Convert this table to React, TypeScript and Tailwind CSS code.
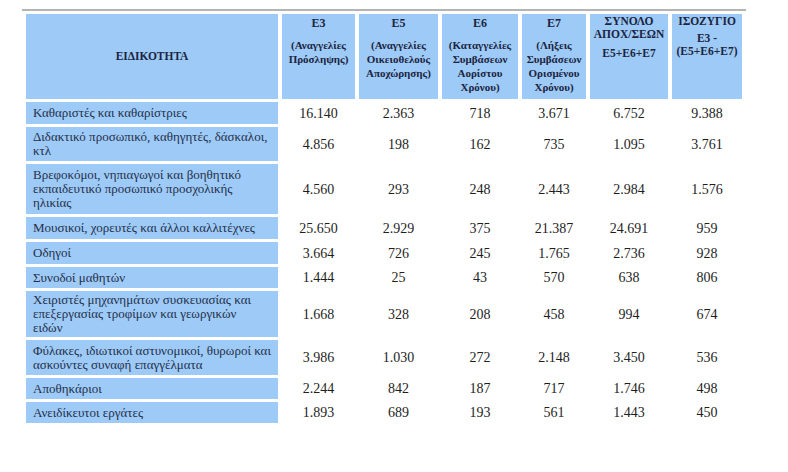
const headers = [
  { title: ['Ε3'], sub: ['(Αναγγελίες', 'Πρόσληψης)'] },
  { title: ['Ε5'], sub: ['(Αναγγελίες', 'Οικειοθελούς', 'Αποχώρησης)'] },
  { title: ['Ε6'], sub: ['(Καταγγελίες', 'Συμβάσεων', 'Αορίστου', 'Χρόνου)'] },
  { title: ['Ε7'], sub: ['(Λήξεις', 'Συμβάσεων', 'Ορισμένου', 'Χρόνου)'] },
];

const rows = [
  { name: ['Καθαριστές και καθαρίστριες'], v: ['16.140', '2.363', '718', '3.671', '6.752', '9.388'], h: 'h-[22px]' },
  { name: ['Διδακτικό προσωπικό, καθηγητές, δάσκαλοι,', 'κτλ'], v: ['4.856', '198', '162', '735', '1.095', '3.761'], h: 'h-[34px]' },
  {
    name: ['Βρεφοκόμοι, νηπιαγωγοί και βοηθητικό', 'εκπαιδευτικό προσωπικό προσχολικής', 'ηλικίας'],
    v: ['4.560', '293', '248', '2.443', '2.984', '1.576'],
    h: 'h-[50px]',
  },
  { name: ['Μουσικοί, χορευτές και άλλοι καλλιτέχνες'], v: ['25.650', '2.929', '375', '21.387', '24.691', '959'], h: 'h-[22px]' },
  { name: ['Οδηγοί'], v: ['3.664', '726', '245', '1.765', '2.736', '928'], h: 'h-[22px]' },
  { name: ['Συνοδοί μαθητών'], v: ['1.444', '25', '43', '570', '638', '806'], h: 'h-[21px]' },
  {
    name: ['Χειριστές μηχανημάτων συσκευασίας και', 'επεξεργασίας τροφίμων και γεωργικών', 'ειδών'],
    v: ['1.668', '328', '208', '458', '994', '674'],
    h: 'h-[46px]',
  },
  {
    name: ['Φύλακες, ιδιωτικοί αστυνομικοί, θυρωροί και', 'ασκούντες συναφή επαγγέλματα'],
    v: ['3.986', '1.030', '272', '2.148', '3.450', '536'],
    h: 'h-[35px]',
  },
  { name: ['Αποθηκάριοι'], v: ['2.244', '842', '187', '717', '1.746', '498'], h: 'h-[21px]' },
  { name: ['Ανειδίκευτοι εργάτες'], v: ['1.893', '689', '193', '561', '1.443', '450'], h: 'h-[21px]' },
];

export default function App() {
  return (
    <div className="w-[788px] h-[472px] bg-white font-[family-name:Liberation_Serif,serif] pl-[22px] pt-[9px]">
      <table className="table-fixed w-[724px] border-separate border-spacing-x-[4px] border-spacing-y-[3px] border-t-2 border-[#b4b4b4]">
        <colgroup>
          <col className="w-[252px]" />
          <col className="w-[73px]" />
          <col className="w-[79px]" />
          <col className="w-[76px]" />
          <col className="w-[64px]" />
          <col className="w-[78px]" />
          <col className="w-[70px]" />
        </colgroup>
        <thead>
          <tr className="h-[85px]">
            <th className="bg-[#9dcaf7] text-[11.5px] font-bold text-[#1c2440] align-middle text-center">
              ΕΙΔΙΚΟΤΗΤΑ
            </th>
            {headers.map((hd) => (
              <th key={hd.title[0]} className="bg-[#9dcaf7] align-top text-center font-bold text-[#1c2440] text-[11px] leading-[14px] pt-[2px] px-0">
                <div className="text-[12px]">{hd.title[0]}</div>
                <div className="mt-[8px]">
                  {hd.sub.map((s) => (
                    <div key={s} className="whitespace-nowrap">{s}</div>
                  ))}
                </div>
              </th>
            ))}
            <th className="bg-[#9dcaf7] align-top text-center font-bold text-[#1c2440] text-[11.5px] leading-[13px] pt-[1px] px-0">
              <div>ΣΥΝΟΛΟ</div>
              <div className="whitespace-nowrap">ΑΠΟΧ/ΣΕΩΝ</div>
              <div className="mt-[5px] leading-[14px]">Ε5+Ε6+Ε7</div>
            </th>
            <th className="bg-[#9dcaf7] align-top text-center font-bold text-[#1c2440] text-[11.5px] leading-[13px] pt-[1px] px-0">
              <div>ΙΣΟΖΥΓΙΟ</div>
              <div className="mt-[4px]">Ε3 -</div>
              <div className="whitespace-nowrap">(Ε5+Ε6+Ε7)</div>
            </th>
          </tr>
        </thead>
        <tbody>
          {rows.map((r) => (
            <tr key={r.name[0]} className={r.h}>
              <td className="bg-[#9dcaf7] text-[13px] leading-[14px] text-[#26304a] pl-[7px] align-middle">
                {r.name.map((n) => (
                  <div key={n} className="whitespace-nowrap">{n}</div>
                ))}
              </td>
              {r.v.map((x, i) => (
                <td key={i} className="text-center align-middle text-[14px] text-[#1e1e1e]">
                  {x}
                </td>
              ))}
            </tr>
          ))}
        </tbody>
      </table>
    </div>
  );
}
